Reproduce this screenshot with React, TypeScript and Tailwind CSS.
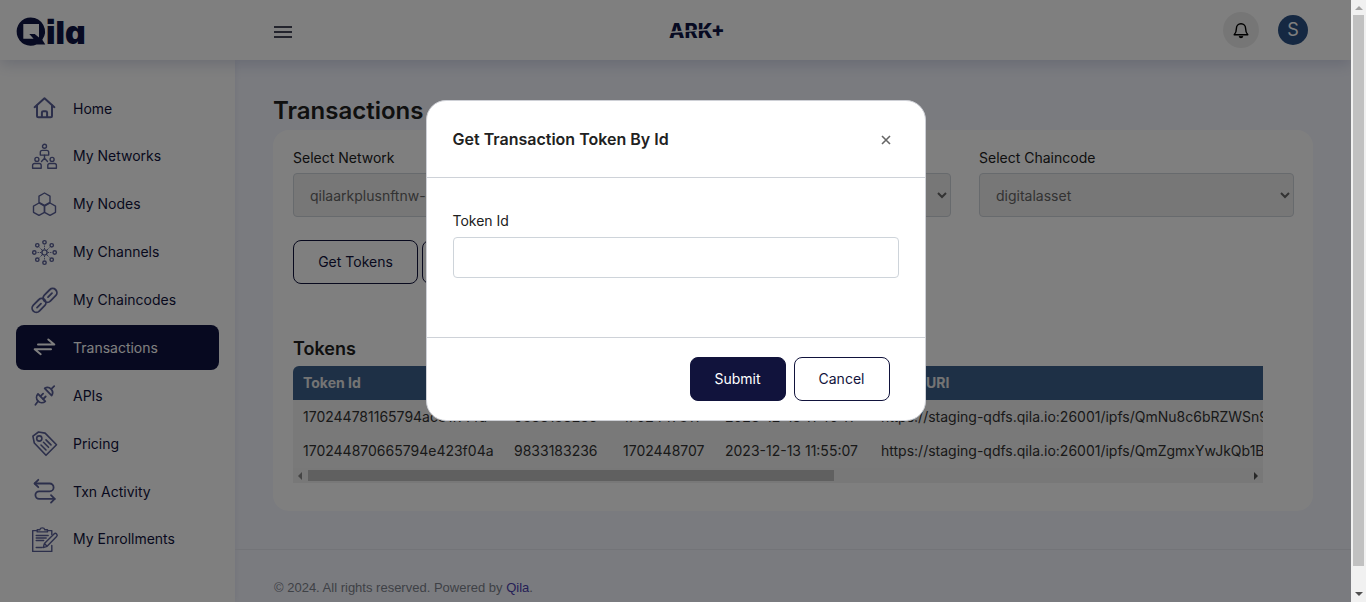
import React from 'react';

type IconProps = { children: React.ReactNode };

const NavIcon: React.FC<IconProps> = ({ children }) => (
  <svg
    className="w-[25px] h-[25px] shrink-0 overflow-visible"
    viewBox="0 0 25 25"
    fill="none"
    stroke="currentColor"
    strokeWidth="1.4"
    strokeLinecap="round"
    strokeLinejoin="round"
    aria-hidden="true"
  >
    {children}
  </svg>
);

const HEX = 'l5.5 3.1v6.2l-5.5 3.1l-5.5-3.1v-6.2z';

const navItems = [
  {
    label: 'Home',
    icon: (
      <g strokeWidth="2">
        <path d="M2.6 11.2L12.5 2.2l9.900 9" />
        <path d="M5 9.500v10.300a1.500 1.500 0 0 0 1.500 1.500h12a1.500 1.500 0 0 0 1.500-1.500V9.500" />
        <path d="M9.900 21v-4.400a1.400 1.400 0 0 1 1.400-1.400h2.400a1.400 1.400 0 0 1 1.400 1.400V21" />
      </g>
    ),
  },
  {
    label: 'My Networks',
    icon: (
      <>
        <circle cx="12.5" cy="2.3" r="2" />
        <path d="M8.3 11.1V8.4a2 2 0 0 1 2-2h4.4a2 2 0 0 1 2 2v2.7z" />
        <circle cx="4.9" cy="15.4" r="2" />
        <path d="M.6 24.2v-2.7a2 2 0 0 1 2-2h4.6a2 2 0 0 1 2 2v2.7z" />
        <circle cx="20.1" cy="15.4" r="2" />
        <path d="M15.8 24.2v-2.7a2 2 0 0 1 2-2h4.6a2 2 0 0 1 2 2v2.7z" />
        <path d="M12.5 11.2v3l-3 3.2M12.5 14.2l3 3.2" />
      </>
    ),
  },
  {
    label: 'My Nodes',
    icon: (
      <>
        <path d={'M12.5 1' + HEX} />
        <path d={'M7 11' + HEX} />
        <path d={'M18 11' + HEX} />
      </>
    ),
  },
  {
    label: 'My Channels',
    icon: (
      <>
        <circle cx="12.5" cy="12.5" r="2.6" />
        <circle cx="12.5" cy="2.3" r="1.7" />
        <circle cx="12.5" cy="22.7" r="1.7" />
        <circle cx="2.3" cy="12.5" r="1.7" />
        <circle cx="22.7" cy="12.5" r="1.7" />
        <circle cx="5.3" cy="5.3" r="1.7" />
        <circle cx="19.7" cy="5.3" r="1.7" />
        <circle cx="5.3" cy="19.7" r="1.7" />
        <circle cx="19.7" cy="19.7" r="1.7" />
        <path
          strokeWidth="1"
          strokeLinecap="butt"
          strokeDasharray="1.2 1"
          d="M12.5 9V5M12.5 16v4M9 12.5H5M16 12.5h4M10 10L7 7M15 10l3-3M10 15l-3 3M15 15l3 3"
        />
      </>
    ),
  },
  {
    label: 'My Chaincodes',
    icon: (
      <g strokeWidth="1.8">
        <rect x="-1" y="13.2" width="16" height="8.4" rx="4.2" transform="rotate(-45 7 17.4)" />
        <rect x="10" y="3.2" width="16" height="8.4" rx="4.2" transform="rotate(-45 18 7.4)" />
        <path d="M5 19.6l4-4M16 9.100l4-4" />
      </g>
    ),
  },
  {
    label: 'Transactions',
    active: true,
    icon: (
      <g strokeWidth="2">
        <path d="M6 9.500h16.300l-6-5" />
        <path d="M19 14.200H2.700l6 5" />
      </g>
    ),
  },
  {
    label: 'APIs',
    icon: (
      <g strokeWidth="1.8">
        <path d="M3.400 21.800L6 18.300M22.200 3.200l-2.300 2.100" />
        <path d="M6 10.900A5.200 5.200 0 0 0 13.300 18.300z" />
        <path d="M12.700 5.300A5.200 5.200 0 0 1 19.700 12.600z" />
        <path d="M8.600 13.200l2.500-2.500M11.200 16l2.500-2.500" />
      </g>
    ),
  },
  {
    label: 'Pricing',
    icon: (
      <g strokeWidth="1.6">
        <path d="M.9 5.200L6.500 1l6.600 1.100L24.500 13.800L14 24.300L2.300 12z" />
        <circle cx="7.300" cy="7.500" r="2.600" />
        <path d="M9 14l5 5M11.500 11.300l5 5M14 8.900l5 5" />
      </g>
    ),
  },
  {
    label: 'Txn Activity',
    icon: (
      <g strokeWidth="1.8">
        <path d="M2.700 4.500h15a3.900 3.900 0 0 1 0 7.800H7.200a3.800 3.800 0 0 0 0 7.600h15.500" />
        <path d="M6.300.8L2.600 4.500l3.700 3.700M19 16.200l3.700 3.700l-3.700 3.700" />
      </g>
    ),
  },
  {
    label: 'My Enrollments',
    icon: (
      <>
        <path d="M5 3.600H.7v20.800h19.100v-6M15.500 3.600h4.300v3.800" />
        <path d="M5.200 4.900V2.800h2.600a2.600 2.600 0 0 1 5 0h2.700v2.100z" />
        <path d="M4.200 8.500h12M4.200 11h10M4.200 13.500h7.500M4.200 20.500h6" />
        <path d="M11.200 20.600l1.200-4.100l9.600-9.600a1.700 1.700 0 0 1 2.600 2.600l-9.500 9.800zM12.400 16.500l2.700 2.800" />
      </>
    ),
  },
];

const tokens = [
  {
    id: '170244781165794ac81f77fd',
    owner: '9833183236',
    epoch: '1702447811',
    created: '2023-12-13 11:40:11',
    uri: 'https://staging-qdfs.qila.io:26001/ipfs/QmNu8c6bRZWSn9dLk3Vt5xYpHq2RgTz7aEwUfJ4mCsB1oX',
  },
  {
    id: '170244870665794e423f04a',
    owner: '9833183236',
    epoch: '1702448707',
    created: '2023-12-13 11:55:07',
    uri: 'https://staging-qdfs.qila.io:26001/ipfs/QmZgmxYwJkQb1BtR8sNc6uPvD4hLe9KfXa2WqMy5GjTz3V',
  },
];

const QilaLogo = () => (
  <svg className="w-[72px] h-[32px] overflow-visible" viewBox="0 0 72 32" role="img" aria-label="Qila" fill="#0e1444">
    <path
      fillRule="evenodd"
      d="M14.700 3.400A14.200 14.200 0 0 1 26.300 25.800L29.300 30.600H20.500A14.200 14.200 0 1 1 14.700 3.400zM7.300 10V24.700H17.600L13.300 20H18.700L23 23.600V10z"
    />
    <text
      x="30"
      y="30"
      fontFamily="Inter, sans-serif"
      fontWeight="900"
      fontSize="32"
      style={{ fontFeatureSettings: "'cv11', 'ss07'" }}
    >
      ila
    </text>
  </svg>
);

const ArkLogo = () => (
  <svg className="w-[60px] h-[24px]" viewBox="0 0 60 24" role="img" aria-label="ARK+">
    <text x="3" y="20" fontFamily="Inter, sans-serif" fontWeight="800" fontSize="20" fill="#0e1444">
      ARK+
    </text>
    <path d="M2 14.500L43 11.500" stroke="#fff" strokeWidth="1.400" />
  </svg>
);

const TopBar = () => (
  <header className="relative z-10 flex h-[60px] shrink-0 items-center bg-white pl-4 pr-[43px] shadow-[0_4px_14px_rgba(70,80,140,0.22)]">
    <div className="w-[258px]">
      <QilaLogo />
    </div>
    <button type="button" aria-label="Toggle menu" className="pt-1">
      <svg className="h-[14px] w-[18px]" viewBox="0 0 18 14" stroke="#0a0c24" strokeWidth="1.600">
        <path d="M0 2h18M0 7h18M0 12h18" />
      </svg>
    </button>
    <div className="flex flex-1 justify-center pr-[123px]">
      <ArkLogo />
    </div>
    <div className="flex items-center gap-[19px]">
      <button type="button" aria-label="Notifications" className="flex h-9 w-9 items-center justify-center rounded-full bg-[#ededed]">
        <svg className="h-4 w-4 overflow-visible" viewBox="0 0 16 16" fill="none" stroke="#000" strokeWidth="1.400" strokeLinejoin="round">
          <path d="M8 1.700c-3 0-4.600 2.300-4.600 4.800c0 3.300-.9 5-2.200 6.300h13.600c-1.300-1.300-2.200-3-2.200-6.300C12.600 4 11 1.700 8 1.700z" />
          <path d="M6.300 14.300a1.800 1.800 0 0 0 3.400 0" fill="#000" />
        </svg>
      </button>
      <button type="button" className="flex h-[30px] w-[30px] items-center justify-center rounded-full bg-[#2b5184] text-lg text-white">
        S
      </button>
    </div>
  </header>
);

const Sidebar = () => (
  <aside className="w-[235px] shrink-0 bg-white px-4 pt-[26px] shadow-[0_0_6px_rgba(70,80,140,0.1)]">
    <nav className="flex h-[476px] flex-col justify-between">
      {navItems.map((item) => (
        <a
          key={item.label}
          href="#"
          className={
            item.active
              ? 'flex h-[45px] items-center gap-4 rounded-lg bg-[#0e1240] pl-4 text-white'
              : 'flex h-[45px] items-center gap-4 rounded-lg pl-4 text-[#595f96]'
          }
        >
          <NavIcon>{item.icon}</NavIcon>
          <span className={item.active ? 'text-white' : 'text-[#11133c]'}>{item.label}</span>
        </a>
      ))}
    </nav>
  </aside>
);

type FieldProps = { id: string; label: string; value: string };

const SelectField: React.FC<FieldProps> = ({ id, label, value }) => (
  <div>
    <label htmlFor={id} className="block h-[25px] leading-[20px]">
      {label}
    </label>
    <select id={id} disabled className="h-11 w-full rounded border border-[#ced4da] bg-[#efefef] pl-3 text-[#666] opacity-100">
      <option>{value}</option>
    </select>
  </div>
);

const TokenTable = () => (
  <div className="mr-[31px] overflow-hidden rounded-tl-md bg-[#f3f3f3]">
    <table className="w-full whitespace-nowrap text-left">
      <thead className="h-[34px] bg-[#3c608c] text-[#e8e8e8]">
        <tr>
          <th className="min-w-[211px] px-[10px] font-bold">Token Id</th>
          <th className="min-w-[109px] px-[10px] font-bold">Owner</th>
          <th className="min-w-[102px] px-[10px] font-bold">Epoch</th>
          <th className="min-w-[156px] px-[10px] font-bold">Created</th>
          <th className="px-[10px] font-bold">Token URI</th>
        </tr>
      </thead>
      <tbody className="text-[#333]">
        {tokens.map((token) => (
          <tr key={token.id} className="h-[34px]">
            <td className="px-[10px]">{token.id}</td>
            <td className="px-[10px]">{token.owner}</td>
            <td className="px-[10px]">{token.epoch}</td>
            <td className="px-[10px]">{token.created}</td>
            <td className="px-[10px]">{token.uri}</td>
          </tr>
        ))}
      </tbody>
    </table>
    <div className="flex h-[15px] items-center bg-[#f1f1f1] px-[5px]">
      <span className="h-0 w-0 border-y-4 border-r-4 border-y-transparent border-r-[#8a8a8a]" />
      <div className="mx-[6px] flex-1">
        <div className="h-[11px] w-[56%] bg-[#c1c1c1]" />
      </div>
      <span className="h-0 w-0 border-y-4 border-l-4 border-y-transparent border-l-[#505050]" />
    </div>
  </div>
);

const TokenDialog = () => (
  <div
    role="dialog"
    aria-modal="true"
    aria-labelledby="dialog-title"
    className="w-[500px] rounded-[20px] border border-[#ced0d6] bg-white text-[#212121]"
  >
    <div className="flex h-[77px] items-center justify-between border-b border-[#ced2d8] pl-[26px] pr-8">
      <h2 id="dialog-title" className="text-base font-semibold">
        Get Transaction Token By Id
      </h2>
      <button type="button" aria-label="Close" className="px-[2px] pt-1 pb-[2px]">
        <svg className="h-[10px] w-[10px]" viewBox="0 0 10 10" stroke="#666" strokeWidth="1.600">
          <path d="M1 1l8 8M9 1l-8 8" />
        </svg>
      </button>
    </div>
    <form>
      <div className="h-[160px] border-b border-[#ced2d8] px-[26px] pt-[33px]">
        <label htmlFor="token-id" className="block h-[26px] leading-[20px]">
          Token Id
        </label>
        <input id="token-id" type="text" className="h-[41px] w-full rounded border border-[#ced4da] px-3" />
      </div>
      <div className="flex justify-end gap-2 pb-[19px] pl-[26px] pr-[35px] pt-[19px]">
        <button type="button" className="h-11 w-24 rounded-lg border border-[#11133c] bg-[#11133c] text-white">
          Submit
        </button>
        <button type="button" className="h-11 w-24 rounded-lg border border-[#11133c] bg-white text-[#11133c]">
          Cancel
        </button>
      </div>
    </form>
  </div>
);

const PageScrollbar = () => (
  <div className="flex w-[15px] shrink-0 flex-col items-center bg-[#f1f1f1] py-[6px]">
    <span className="h-0 w-0 border-x-4 border-b-4 border-x-transparent border-b-[#a3a3a3]" />
    <div className="flex w-[11px] flex-1 pt-[5px] pb-[26px]">
      <div className="w-full bg-[#c1c1c1]" />
    </div>
    <span className="h-0 w-0 border-x-4 border-t-4 border-x-transparent border-t-[#505050]" />
  </div>
);

const App: React.FC = () => {
  return (
    <div className="flex h-screen font-['Inter',sans-serif] text-sm text-[#212121]">
      <div className="relative flex min-w-0 flex-1 flex-col overflow-hidden bg-[#f5f7ff]">
        <TopBar />
        <div className="flex flex-1">
          <Sidebar />
          <div className="min-w-0 flex-1">
            <main className="pb-[38px] pl-[38px] pr-[38px] pt-[34px]">
              <h1 className="h-9 text-2xl font-semibold leading-[34px]">Transactions</h1>
              <section className="rounded-2xl bg-white pb-[28px] pl-[20px] pr-[19px] pt-[18px]">
                <div className="grid grid-cols-3 gap-7">
                  <SelectField id="network" label="Select Network" value="qilaarkplusnftnw-channel" />
                  <SelectField id="channel" label="Select Channel" value="defaultchannel" />
                  <SelectField id="chaincode" label="Select Chaincode" value="digitalasset" />
                </div>
                <div className="flex gap-1 pt-[23px]">
                  <button type="button" className="h-11 w-[125px] rounded-lg border border-[#11133c] text-[#11133c]">
                    Get Tokens
                  </button>
                  <button type="button" className="h-11 w-[150px] rounded-lg border border-[#11133c] text-[#11133c]">
                    Get Token By Id
                  </button>
                </div>
                <h2 className="mt-[50px] h-8 text-lg font-semibold leading-[30px]">Tokens</h2>
                <TokenTable />
              </section>
            </main>
            <footer className="border-t border-[#e6e8f0] pl-[39px] pt-[29px] font-['Liberation_Sans',sans-serif] text-[13px] text-[#7d828c]">
              © 2024. All rights reserved. Powered by{' '}
              <a href="#" className="text-[#4b3fae]">
                Qila
              </a>
              .
            </footer>
          </div>
        </div>

        <div className="absolute inset-0 z-20 flex items-start justify-center bg-black/50 pt-[100px]">
          <TokenDialog />
        </div>
      </div>
      <PageScrollbar />
    </div>
  );
};

export default App;
